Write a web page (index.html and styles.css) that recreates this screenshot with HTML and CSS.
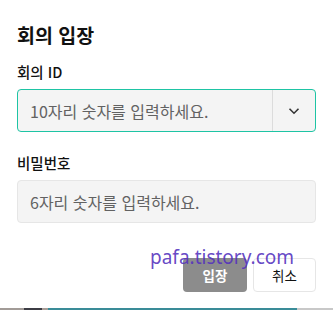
FILE: index.html
```html
<!DOCTYPE html>
<html lang="ko">
<head>
    <meta charset="UTF-8">
    <meta name="viewport" content="width=device-width, initial-scale=1.0">
    <title>회의 입장</title>
    <link rel="stylesheet" href="styles.css">
</head>
<body>

    <!-- 회의 입장 다이얼로그 -->
    <div class="dialog">
        <h1>회의 입장</h1>

        <label class="label">회의 ID</label>
        <div class="field field-active">
            <span class="placeholder">10자리 숫자를 입력하세요.</span>
            <span class="toggle">
                <svg width="14" height="14" viewBox="0 0 14 14">
                    <path d="M2.5 4.8 L7 9.2 L11.5 4.8" fill="none" stroke="#333" stroke-width="1.6"/>
                </svg>
            </span>
        </div>

        <label class="label">비밀번호</label>
        <div class="field">
            <span class="placeholder">6자리 숫자를 입력하세요.</span>
        </div>

        <div class="actions">
            <button class="btn btn-primary">입장</button>
            <button class="btn btn-cancel">취소</button>
        </div>

        <div class="watermark">pafa.tistory.com</div>
    </div>

    <!-- 뒤쪽 화면 일부 -->
    <div class="backdrop"></div>

</body>
</html>
```

FILE: styles.css
```css
* {
    margin: 0;
    padding: 0;
    box-sizing: border-box;
}
html, body {
    width: 100%;
    height: 100%;
    background: #fff;
    font-family: "Noto Sans CJK KR", "Noto Sans", sans-serif;
    color: #111;
    overflow: hidden;
}
.dialog {
    position: relative;
    height: 308px;
    padding: 21px 17px 0 17px;
    background: #fff;
    border-radius: 0 0 5px 5px;
}
h1 {
    font-size: 19.5px;
    font-weight: bold;
    line-height: 28px;
    margin-bottom: 14px;
}
.label {
    display: block;
    font-size: 14.5px;
    font-weight: 500;
    line-height: 18px;
    margin-bottom: 8px;
}
.field {
    display: flex;
    align-items: center;
    height: 43px;
    background: #f4f4f4;
    border: 1px solid #e6e6e6;
    border-radius: 4px;
    margin-bottom: 22px;
}
.field-active {
    border-color: #1ec4a4;
}
.placeholder {
    flex: 1;
    padding-left: 12px;
    font-size: 16px;
    color: #626262;
}
.toggle {
    display: flex;
    align-items: center;
    justify-content: center;
    width: 43px;
    height: 100%;
    border-left: 1px solid #dcdcdc;
}
.actions {
    display: flex;
    justify-content: flex-end;
    gap: 6px;
    margin-top: 35px;
}
.btn {
    width: 64px;
    height: 34px;
    border-radius: 4px;
    font-family: "Noto Sans CJK KR", sans-serif;
    font-size: 13.5px;
}
.btn-primary {
    background: #8c8c8c;
    color: #fff;
    font-weight: bold;
    border: none;
}
.btn-cancel {
    width: 63px;
    background: #fff;
    color: #111;
    border: 1px solid #e6e6e6;
}
/* 워터마크 */
.watermark {
    position: absolute;
    left: 150px;
    top: 244px;
    font-family: "Noto Sans", sans-serif;
    font-size: 19px;
    color: rgba(84, 50, 190, 0.9);
    pointer-events: none;
}
.backdrop {
    height: 2px;
    background: linear-gradient(90deg,
        #a29b97 0, #a29b97 24px,
        #3c3c44 24px, #3c3c44 42px,
        #a89e98 42px, #a89e98 48px,
        #3a8c98 48px, #3a8c98 297px,
        #c8c8c8 297px);
}
```
